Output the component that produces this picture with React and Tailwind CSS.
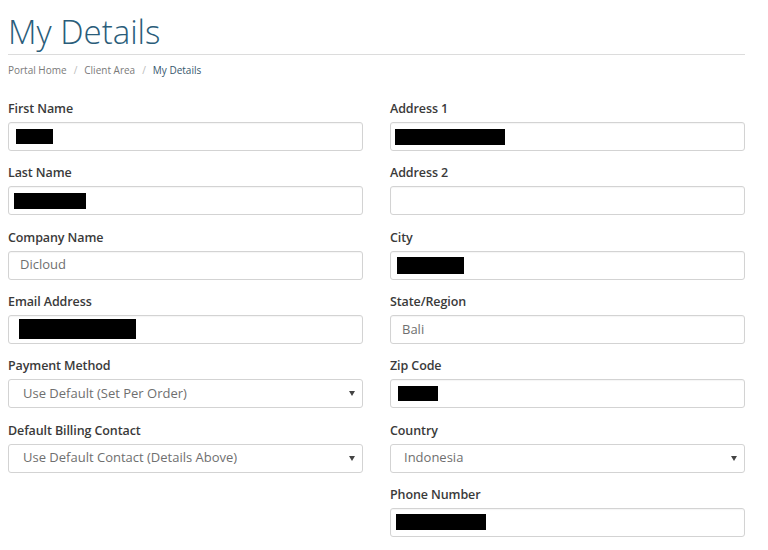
import React from 'react';

const Redacted = ({ w, h, ml }) => (
  <span className={`block bg-black ${w} ${h} ${ml}`}></span>
);

const Field = ({ label, children }) => (
  <div>
    <div className="h-[19px] pt-[1px] leading-[18px] mb-[4px] text-[12.5px] font-semibold text-[#3a3a3a] tracking-[-0.1px]">{label}</div>
    {children}
  </div>
);

const Input = ({ children }) => (
  <div className="h-[29px] border border-[#d3d3d3] rounded-[3px] bg-white flex items-center shadow-[inset_0_1px_1px_rgba(0,0,0,0.04)]">
    {children}
  </div>
);

const TextValue = ({ value }) => (
  <span className="pl-[11px] text-[13px] text-[#6f6f6f]">{value}</span>
);

const Select = ({ value, pad }) => (
  <div className="h-[29px] border border-[#d3d3d3] rounded-[3px] bg-white flex items-center justify-between">
    <span className={`${pad} text-[13px] text-[#6f6f6f]`}>{value}</span>
    <svg width="6" height="5" viewBox="0 0 6 5" className="mr-[7px]">
      <path d="M0 0 L6 0 L3 5 Z" fill="#444" />
    </svg>
  </div>
);

const App = () => {
  return (
    <div className="bg-white min-h-[550px] w-[768px] overflow-hidden" style={{ fontFamily: '"Open Sans", "Liberation Sans", sans-serif' }}>
      <div className="ml-[8px] w-[737px]">
        <h1 className="pt-[14px] text-[33px] leading-[36px] font-light text-[#2a5d7a]">My Details</h1>
        <div className="mt-[4px] border-t border-[#dcdcdc]"></div>
        <div className="mt-[8px] flex items-center text-[10px] leading-[14px] text-[#7a7a7a]">
          <span>Portal Home</span>
          <span className="mx-[7px] text-[#bbb]">/</span>
          <span>Client Area</span>
          <span className="mx-[7px] text-[#bbb]">/</span>
          <span className="text-[#37586e]">My Details</span>
        </div>

        <div className="mt-[22px] grid grid-cols-2 gap-x-[27px]">
          <div className="flex flex-col gap-y-[12.33px]">
            <Field label="First Name">
              <Input><Redacted w="w-[37px]" h="h-[15px]" ml="ml-[7px]" /></Input>
            </Field>
            <Field label="Last Name">
              <Input><Redacted w="w-[72px]" h="h-[16px]" ml="ml-[5px]" /></Input>
            </Field>
            <Field label="Company Name">
              <Input><TextValue value="Dicloud" /></Input>
            </Field>
            <Field label="Email Address">
              <Input><Redacted w="w-[117px]" h="h-[20px]" ml="ml-[10px]" /></Input>
            </Field>
            <Field label="Payment Method">
              <Select value="Use Default (Set Per Order)" pad="pl-[14px]" />
            </Field>
            <Field label="Default Billing Contact">
              <Select value="Use Default Contact (Details Above)" pad="pl-[14px]" />
            </Field>
          </div>

          <div className="flex flex-col gap-y-[12.33px]">
            <Field label="Address 1">
              <Input><Redacted w="w-[110px]" h="h-[16px]" ml="ml-[4px]" /></Input>
            </Field>
            <Field label="Address 2">
              <Input></Input>
            </Field>
            <Field label="City">
              <Input><Redacted w="w-[67px]" h="h-[17px]" ml="ml-[6px]" /></Input>
            </Field>
            <Field label="State/Region">
              <Input><TextValue value="Bali" /></Input>
            </Field>
            <Field label="Zip Code">
              <Input><Redacted w="w-[40px]" h="h-[15px]" ml="ml-[7px]" /></Input>
            </Field>
            <Field label="Country">
              <Select value="Indonesia" pad="pl-[13px]" />
            </Field>
            <Field label="Phone Number">
              <Input><Redacted w="w-[90px]" h="h-[16px]" ml="ml-[5px]" /></Input>
            </Field>
          </div>
        </div>
      </div>
    </div>
  );
};

export default App;
